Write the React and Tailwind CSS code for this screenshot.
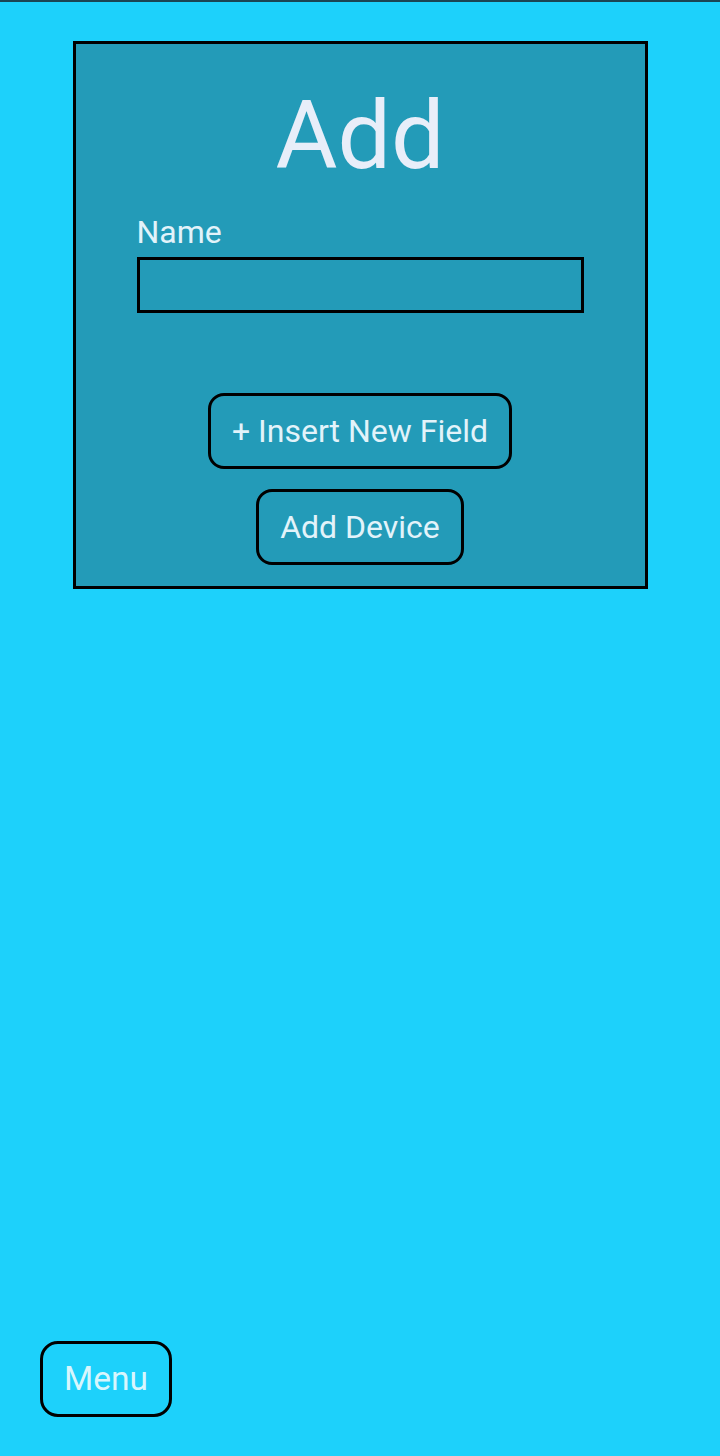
export default function App() {
  return (
    <div
      className="flex flex-col w-[720px] h-[1456px] bg-[#1dd1fb] overflow-hidden"
      style={{ fontFamily: 'Roboto, "Noto Sans", sans-serif' }}
    >
      <div className="h-[2px] bg-[#1b4553] shrink-0" />

      {/* Add card */}
      <div className="mt-[39px] mx-auto w-[575px] border-[3px] border-black bg-[#239bb8] px-[61px] pt-[36px] pb-[21px] flex flex-col">
        <h1 className="text-center text-[95px] leading-[111px] text-[#e8eef9] font-normal">Add</h1>
        <label className="mt-[23px] text-[32px] leading-[37px] text-[#e2f3fa]">Name</label>
        <input
          type="text"
          className="mt-[6px] w-[447px] h-[56px] border-[3px] border-black bg-transparent outline-none"
        />
        <div className="flex flex-col items-center mt-[80px] gap-[20px]">
          <button className="h-[76px] px-[21px] border-[3px] border-black rounded-[16px] text-[32px] text-[#e2f3fa]">
            + Insert New Field
          </button>
          <button className="h-[76px] px-[21px] border-[3px] border-black rounded-[16px] text-[32px] text-[#e2f3fa]">
            Add Device
          </button>
        </div>
      </div>

      <div className="flex-1" />

      <div className="pl-[40px] pb-[39px]">
        <button className="w-[132px] h-[76px] border-[3px] border-black rounded-[18px] text-[33.5px] text-[#d8f6fd]">
          Menu
        </button>
      </div>
    </div>
  );
}
